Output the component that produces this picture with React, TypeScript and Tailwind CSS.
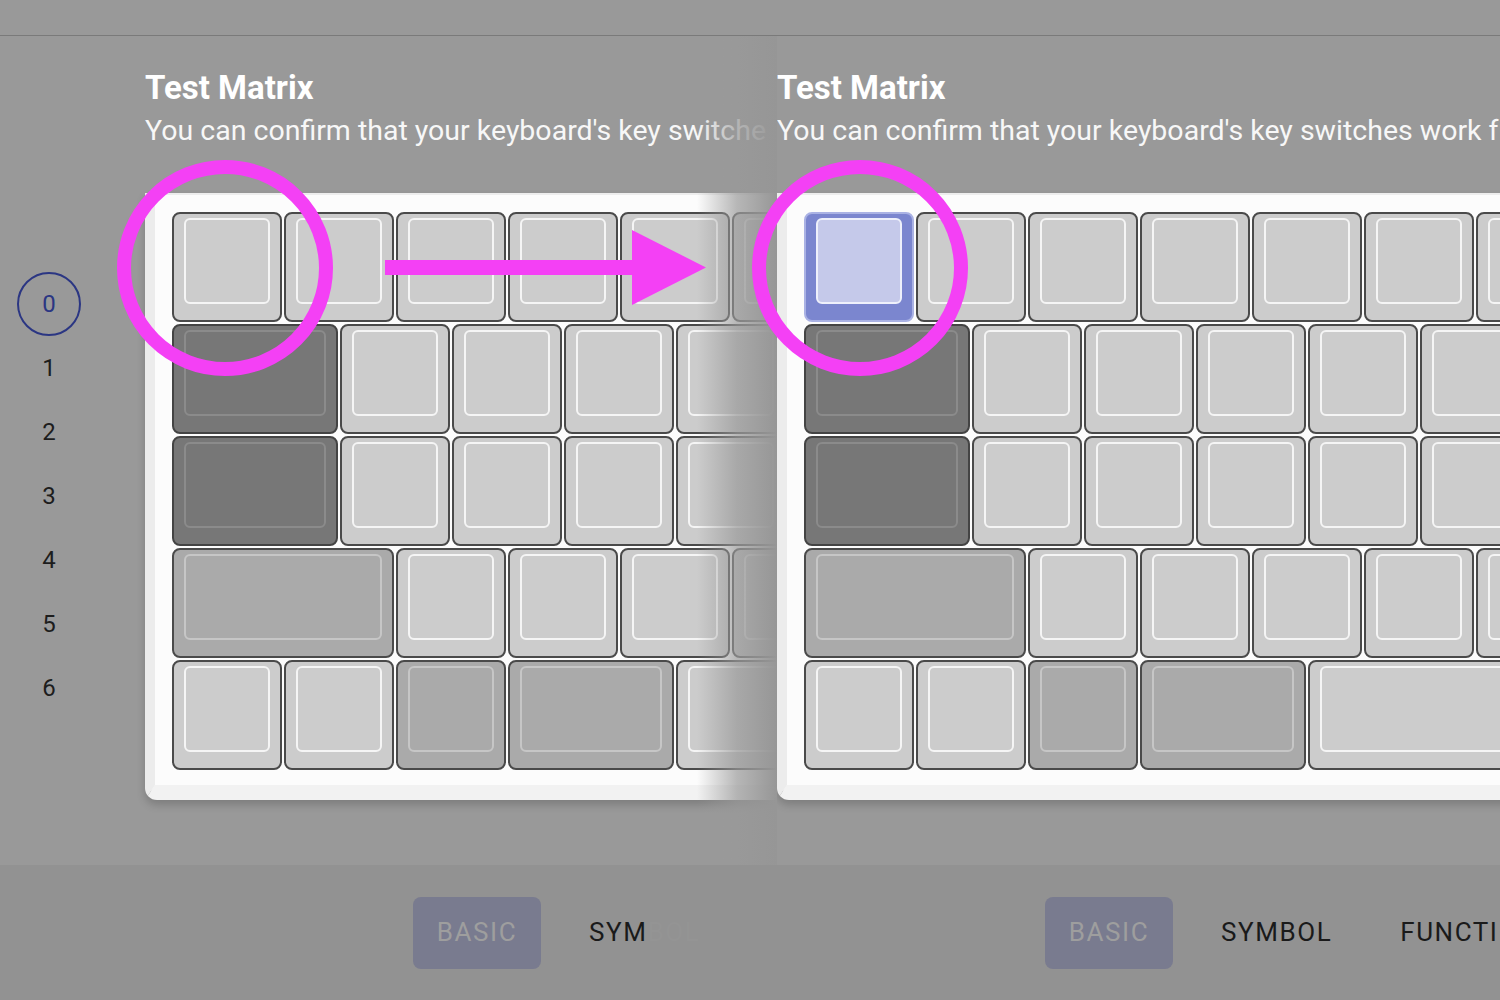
import React from "react";

type Tone = "light" | "mid" | "dark" | "hl";
type TKey = { w: string; tone: Tone };

const toneClass: Record<Tone, { outer: string; inner: string }> = {
  light: { outer: "bg-[#cccccc] border-[#4a4a4a]", inner: "border-[#f5f5f5]" },
  mid: { outer: "bg-[#aaaaaa] border-[#4a4a4a]", inner: "border-[#c6c6c6]" },
  dark: { outer: "bg-[#777777] border-[#444444]", inner: "border-[#8b8b8b]" },
  hl: { outer: "bg-[#7b86cf] border-[#aab2e4]", inner: "bg-[#c5c9ea] border-[#eef0fb]" },
};

// widths: 1u = 112px pitch minus the 2px gap
const U1 = "w-[110px]";
const U15 = "w-[166px]";
const U2 = "w-[222px]";
const SPACE = "w-[698px]";

const ones = (n: number): TKey[] =>
  Array.from({ length: n }, () => ({ w: U1, tone: "light" as Tone }));

function buildRows(highlight: boolean): TKey[][] {
  return [
    [{ w: U1, tone: highlight ? "hl" : "light" }, ...ones(12)],
    [{ w: U15, tone: "dark" }, ...ones(12)],
    [{ w: U15, tone: "dark" }, ...ones(12)],
    [{ w: U2, tone: "mid" }, ...ones(11)],
    [
      { w: U1, tone: "light" },
      { w: U1, tone: "light" },
      { w: U1, tone: "mid" },
      { w: U15, tone: "mid" },
      { w: SPACE, tone: "light" },
    ],
  ];
}

function Key({ w, tone }: TKey) {
  const t = toneClass[tone];
  return (
    <div
      className={`flex h-[110px] shrink-0 flex-col rounded-[8px] border-2 px-[10px] pb-[16px] pt-[4px] ${w} ${t.outer}`}
    >
      <div className={`flex-1 rounded-[6px] border-2 ${t.inner}`} />
    </div>
  );
}

function Card({ highlight }: { highlight: boolean }) {
  const rows = buildRows(highlight);
  return (
    <div className="mt-[44px] flex w-[1600px] shrink-0 flex-col gap-[2px] rounded-bl-[12px] border-b-[15px] border-l-[10px] border-t-2 border-b-[#f2f2f2] border-l-[#ececec] border-t-[#ededed] bg-[#fcfcfc] pb-[15px] pl-[17px] pt-[17px] shadow-[0_5px_8px_rgba(0,0,0,0.18)]">
      {rows.map((row, i) => (
        <div key={i} className="flex gap-[2px]">
          {row.map((k, j) => (
            <Key key={j} {...k} />
          ))}
        </div>
      ))}
    </div>
  );
}

function Sidebar() {
  const layers = ["0", "1", "2", "3", "4", "5", "6"];
  return (
    <div className="flex w-[145px] shrink-0 flex-col pt-[236px]">
      <div className="flex w-[98px] flex-col items-center">
        {layers.map((l, i) =>
          i === 0 ? (
            <div
              key={l}
              className="flex h-[64px] w-[64px] items-center justify-center rounded-full border-2 border-[#2b3683] text-[24px] text-[#2b3683]"
            >
              {l}
            </div>
          ) : (
            <div key={l} className="flex h-[64px] w-[64px] items-center justify-center text-[24px] text-[#1d1d1d]">
              {l}
            </div>
          )
        )}
      </div>
    </div>
  );
}

function Screen({ first }: { first: boolean }) {
  return (
    <div className="flex h-[964px] flex-col">
      {/* main */}
      <div className="relative flex h-[829px]">
        {first && <Sidebar />}
        <div className="flex flex-col pt-[32px]">
          <h1 className="whitespace-nowrap text-[33px] font-bold leading-[40px] text-white">Test Matrix</h1>
          <p className="mt-[5px] whitespace-nowrap text-[28.5px] leading-[36px] text-[#f7f7f7]">
            {first ? "You can confirm that your keyboard's key switche" : "You can confirm that your keyboard's key switches work f"}
          </p>
          <Card highlight={!first} />
        </div>
        {first && (
          <div className="absolute right-0 top-0 h-full w-[80px] bg-linear-to-r from-transparent via-[#999999]/70 to-[#969696]" />
        )}
      </div>
      {/* tabs */}
      <div className={`flex h-[135px] shrink-0 items-center gap-[28px] bg-[#929292] ${first ? "pl-[413px]" : "pl-[268px]"}`}>
        <div className="flex h-[72px] w-[128px] shrink-0 items-center justify-center rounded-[8px] bg-[#797b8f] text-[26px] tracking-[0.06em] text-[#9e9e9e]">
          BASIC
        </div>
        {first ? (
          <div className="shrink-0 whitespace-nowrap px-[20px] text-[26px] tracking-[0.06em] text-[#1a1a1a]">
            SYM<span className="text-[#949494]">BOL</span>
          </div>
        ) : (
          <>
            <div className="shrink-0 whitespace-nowrap px-[20px] text-[26px] tracking-[0.06em] text-[#1a1a1a]">SYMBOL</div>
            <div className="shrink-0 whitespace-nowrap px-[20px] text-[26px] tracking-[0.06em] text-[#1a1a1a]">FUNCTI</div>
          </>
        )}
      </div>
    </div>
  );
}

function Annotations() {
  const pink = "#f440f5";
  return (
    <svg className="pointer-events-none absolute left-0 top-0" width={1500} height={1000} viewBox="0 0 1500 1000">
      <circle cx={225} cy={268} r={101} fill="none" stroke={pink} strokeWidth={14} />
      <circle cx={860} cy={268} r={101} fill="none" stroke={pink} strokeWidth={14} />
      <rect x={385} y={260} width={249} height={15} fill={pink} />
      <polygon points="632,230 706,267.5 632,305" fill={pink} />
    </svg>
  );
}

export default function App() {
  return (
    <div className="relative flex h-[1000px] w-[1500px] flex-col overflow-hidden bg-[#999999] font-['Roboto','Liberation_Sans',sans-serif]">
      <div className="h-[36px] shrink-0 border-b border-[#7a7a7a]" />
      <div className="flex h-[964px]">
        <div className="relative w-[777px] shrink-0 overflow-hidden">
          <Screen first={true} />
        </div>
        <div className="w-[723px] shrink-0 overflow-hidden">
          <Screen first={false} />
        </div>
      </div>
      <Annotations />
    </div>
  );
}
